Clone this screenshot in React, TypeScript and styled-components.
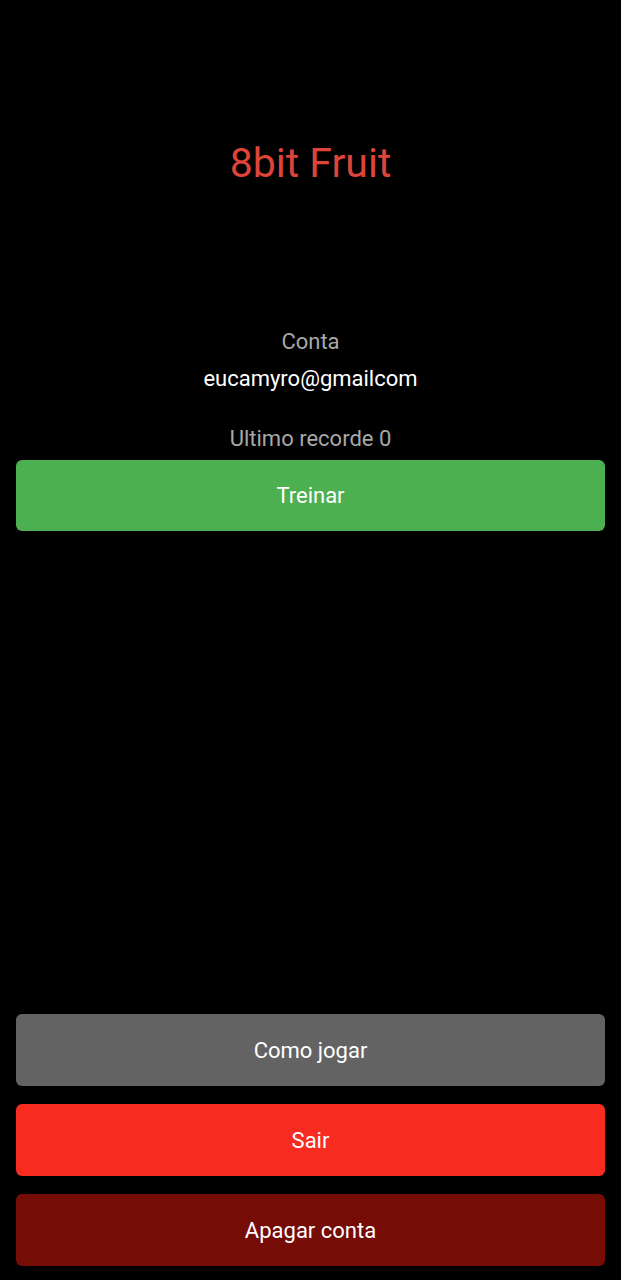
import React from "react";
import styled, { createGlobalStyle } from "styled-components";

const Global = createGlobalStyle`
  html, body { margin: 0; padding: 0; background: #000; }
  body { font-family: Roboto, "Noto Sans", Arial, sans-serif; }
  * { box-sizing: border-box; }
`;

const Page = styled.div`
  min-height: 1280px;
  display: flex;
  flex-direction: column;
  padding: 0 16px 14px;
  background: #000;
`;

const Title = styled.h1`
  margin: 140px 0 0;
  height: 46px;
  line-height: 46px;
  text-align: center;
  font-size: 41px;
  font-weight: 400;
  color: #de4438;
`;

const Info = styled.div`
  margin-top: 144px;
  display: flex;
  flex-direction: column;
  align-items: center;
`;

const Label = styled.div<{ $top?: number }>`
  margin-top: ${(p) => p.$top ?? 0}px;
  height: 24px;
  line-height: 24px;
  font-size: 22px;
  color: #a8a8a8;
`;

const Email = styled.div`
  margin-top: 12px;
  height: 26px;
  line-height: 26px;
  font-size: 22px;
  color: #fff;
`;

const Button = styled.button<{ $bg: string }>`
  width: 100%;
  height: 72px;
  border: none;
  border-radius: 6px;
  background: ${(p) => p.$bg};
  color: #fff;
  font-family: Roboto, "Noto Sans", Arial, sans-serif;
  font-size: 22px;
  font-weight: 400;
  padding: 0;
`;

const TrainButton = styled(Button)`
  margin-top: 9px;
  height: 71px;
`;

const Spacer = styled.div`
  flex: 1;
`;

const Actions = styled.div`
  display: flex;
  flex-direction: column;
  gap: 18px;
`;

export default function App() {
  return (
    <>
      <Global />
      <Page>
        <Title>8bit Fruit</Title>
        <Info>
          <Label>Conta</Label>
          <Email>eucamyro@gmailcom</Email>
          <Label $top={35}>Ultimo recorde 0</Label>
        </Info>
        <TrainButton $bg="#4caf50">Treinar</TrainButton>
        <Spacer />
        <Actions>
          <Button $bg="#636363">Como jogar</Button>
          <Button $bg="#f72b20">Sair</Button>
          <Button $bg="#750c06">Apagar conta</Button>
        </Actions>
      </Page>
    </>
  );
}
